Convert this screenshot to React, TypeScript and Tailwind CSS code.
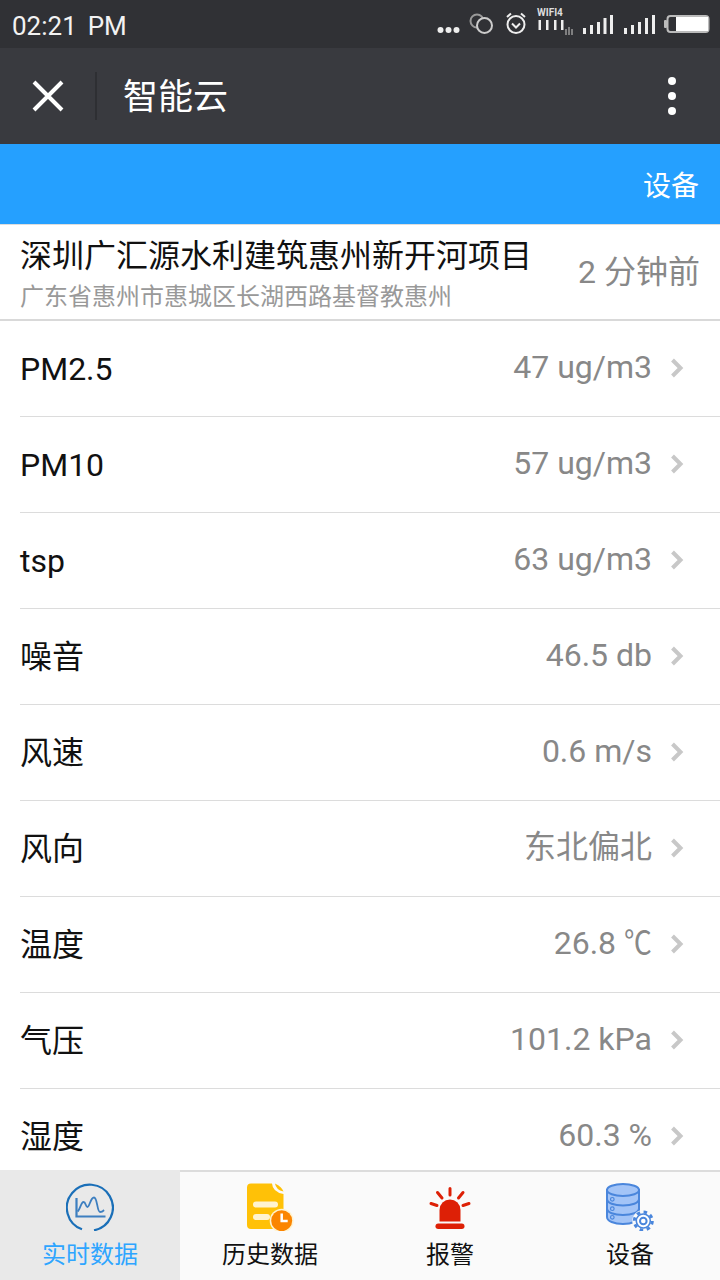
const rows = [
  { name: 'PM2.5', value: '47 ug/m3' },
  { name: 'PM10', value: '57 ug/m3' },
  { name: 'tsp', value: '63 ug/m3' },
  { name: '噪音', value: '46.5 db' },
  { name: '风速', value: '0.6 m/s' },
  { name: '风向', value: '东北偏北' },
  { name: '温度', value: '26.8 ', unit: '℃' },
  { name: '气压', value: '101.2 kPa' },
  { name: '湿度', value: '60.3 %' },
];

function StatusIcons() {
  return (
    <svg width="300" height="48" viewBox="0 0 300 48" fill="none">
      <circle cx="20.5" cy="30" r="3" fill="#eee" />
      <circle cx="28.5" cy="30" r="3" fill="#eee" />
      <circle cx="36.5" cy="30" r="3" fill="#eee" />
      <circle cx="57" cy="21" r="6.5" stroke="#999" strokeWidth="2" />
      <circle cx="64.5" cy="25.5" r="7.5" stroke="#ccc" strokeWidth="2" fill="#303135" />
      <circle cx="96" cy="24.5" r="8.5" stroke="#eee" strokeWidth="2" />
      <path d="M92 23.5l4 4 4-4M87 17l4-3.5M105 17l-4-3.5" stroke="#eee" strokeWidth="2" />
      <text x="117" y="16" fontSize="10" fontWeight="700" fill="#ddd" fontFamily="Roboto, sans-serif">WIFI4</text>
      <rect x="118.5" y="20" width="2.5" height="10" fill="#eee" />
      <rect x="126" y="20" width="2.5" height="10" fill="#eee" />
      <rect x="134" y="20" width="2.5" height="10" fill="#eee" />
      <rect x="141" y="20" width="2.5" height="10" fill="#eee" />
      <path d="M146 29v6M149 27v8M152 29v6" stroke="#999" strokeWidth="1.5" />
      <rect x="163" y="28" width="3" height="6" fill="#eee" />
      <rect x="170" y="25" width="3" height="9" fill="#eee" />
      <rect x="177" y="22" width="3" height="12" fill="#eee" />
      <rect x="183.5" y="18" width="3" height="16" fill="#eee" />
      <rect x="190" y="15" width="3" height="19" fill="#eee" />
      <rect x="204" y="28" width="3" height="6" fill="#eee" />
      <rect x="211" y="25" width="3" height="9" fill="#eee" />
      <rect x="218" y="22" width="3" height="12" fill="#eee" />
      <rect x="225" y="18" width="3" height="16" fill="#eee" />
      <rect x="232" y="15" width="3" height="19" fill="#eee" />
      <rect x="244" y="20" width="3" height="8" rx="1" fill="#bbb" />
      <rect x="247.5" y="16" width="41" height="16" rx="3" stroke="#bbb" strokeWidth="2" />
      <rect x="256" y="17" width="32" height="14" fill="#fff" />
    </svg>
  );
}

function Chevron() {
  return (
    <svg width="14" height="20" viewBox="0 0 14 20" fill="none" className="mb-[2px]">
      <path d="M2.5 2l8 8-8 8" stroke="#c8c8c8" strokeWidth="4" />
    </svg>
  );
}

function TabIcon({ kind }: { kind: number }) {
  if (kind === 0)
    return (
      <svg width="48" height="48" viewBox="0 0 48 48" fill="none">
        <path d="M16 46.3A23 23 0 1 1 28 47.3" stroke="#1a6fb8" strokeWidth="2.2" />
        <path d="M10.5 15v18.500h29" stroke="#3d7fc0" strokeWidth="2.200" />
        <path d="M11.5 28.5C14 27 15 19 17.5 19S19.5 24 21.5 24S24.5 14.5 28 14.5S31 29 34 29S37 28 38 27" stroke="#3d7fc0" strokeWidth="1.800" />
      </svg>
    );
  if (kind === 1)
    return (
      <svg width="48" height="48" viewBox="0 0 48 48" fill="none">
        <path d="M5 0.5H26Q26.5 9 37.5 11V42a4 4 0 0 1-4 4H5a4 4 0 0 1-4-4V4.500a4 4 0 0 1 4-4z" fill="#ffc107" />
        <path d="M29 0.5Q36 4 37.500 8.500Q30 7 29 0.500z" fill="#ffc107" />
        <rect x="7" y="18.500" width="25" height="6" rx="3" fill="#fff3d0" />
        <rect x="7" y="31" width="17" height="6" rx="3" fill="#fff3d0" />
        <circle cx="35.700" cy="37.700" r="12" fill="#fff3d0" />
        <circle cx="35.700" cy="37.700" r="10.500" fill="#fb8500" />
        <path d="M35.700 30.500v7.500h6" stroke="#fff" strokeWidth="2.500" />
      </svg>
    );
  if (kind === 2)
    return (
      <svg width="48" height="48" viewBox="0 0 48 48" fill="none">
        <path d="M13.500 38.500V27a10.500 10.500 0 0 1 21 0v11.500z" fill="#dd2006" />
        <rect x="9.500" y="40.500" width="29" height="5.500" rx="2.700" fill="#dd2006" />
        <path d="M24 5.500v6.500M11.500 9.500l4.500 5.500M37 9.500l-4.500 5.500M5 20.500l6 2M43 20.500l-6 2" stroke="#dd2006" strokeWidth="3" strokeLinecap="round" />
      </svg>
    );
  return (
    <svg width="48" height="48" viewBox="0 0 48 48" fill="none">
      <path d="M1 7v27c0 4 7 7 16 7s16-3 16-7V7z" fill="#a3c4f7" stroke="#4a86dc" strokeWidth="2" />
      <ellipse cx="17" cy="7" rx="16" ry="6" fill="#a3c4f7" stroke="#4a86dc" strokeWidth="2" />
      <path d="M1 16c0 4 7 6.500 16 6.500s16-2.500 16-6.500M1 25.500c0 4 7 6.500 16 6.500s16-2.500 16-6.500" stroke="#4a86dc" strokeWidth="2" />
      <circle cx="6.300" cy="16.300" r="1.800" stroke="#4a86dc" strokeWidth="1.200" />
      <circle cx="6.300" cy="25.700" r="1.800" stroke="#4a86dc" strokeWidth="1.200" />
      <circle cx="6.300" cy="34.300" r="1.800" stroke="#4a86dc" strokeWidth="1.200" />
      <circle cx="37.300" cy="38" r="11" fill="#fafafa" />
      <circle cx="37.300" cy="38" r="9" stroke="#4a86dc" strokeWidth="3" strokeDasharray="3.500 3.570" />
      <circle cx="37.300" cy="38" r="7" fill="#fff" stroke="#4a86dc" strokeWidth="1.600" />
      <circle cx="37.300" cy="38" r="3.300" stroke="#4a86dc" strokeWidth="2" />
    </svg>
  );
}

const tabs = ['实时数据', '历史数据', '报警', '设备'];

export default function App() {
  return (
    <div className="relative w-[720px] h-[1280px] overflow-hidden bg-white flex flex-col font-['Roboto','Noto_Sans_CJK_SC',sans-serif]">
      <div className="relative h-12 bg-[#303135] flex items-center justify-between pl-3 text-[#f2f2f2]">
        <span className="pt-[3px] text-[26px] leading-none whitespace-pre [word-spacing:-1px]">02:21  PM</span>
        <StatusIcons />
      </div>
      <div className="h-24 bg-[#393a3f] flex items-center text-white">
        <div className="w-[97px] h-12 flex items-center justify-center border-r-2 border-[#2e2f33]">
          <svg width="32" height="32" viewBox="0 0 32 32" fill="none">
            <path d="M2 2l28 28M30 2L2 30" stroke="#fff" strokeWidth="4" />
          </svg>
        </div>
        <span className="pl-[26px] pt-[3px] text-[35px] leading-none">智能云</span>
        <div className="ml-auto mr-[44px] flex flex-col gap-[7px]">
          <div className="w-[8px] h-[8px] rounded-full bg-white" />
          <div className="w-[8px] h-[8px] rounded-full bg-white" />
          <div className="w-[8px] h-[8px] rounded-full bg-white" />
        </div>
      </div>
      <div className="h-20 bg-[#25a0ff] flex items-center justify-end pr-[21px] pt-[6px] text-white text-[28px]">设备</div>
      <div className="h-[97px] flex items-center justify-between pl-[20px] pr-5 border-t border-t-[#dddddd] border-b-2 border-b-[#d9d9d9]">
        <div className="pt-[5px]">
          <div className="text-[32px] leading-[44px] text-[#111]">深圳广汇源水利建筑惠州新开河项目</div>
          <div className="text-[24px] leading-[38px] text-[#999]">广东省惠州市惠城区长湖西路基督教惠州</div>
        </div>
        <span className="text-[32px] text-[#888]">2 分钟前</span>
      </div>
      <div className="pl-[20px]">
        {rows.map((row) => (
          <div key={row.name} className="h-24 flex items-center justify-between pr-[36px] border-b border-[#dcdcdc]">
            <span className="text-[32px] text-[#111]">{row.name}</span>
            <span className="flex items-center gap-[18px] text-[32px] text-[#888]">
              <span className="pb-[4px] whitespace-pre">
                {row.value}
                {row.unit && <span className="inline-block w-[28px] origin-left scale-x-[.87]">{row.unit}</span>}
              </span>
              <Chevron />
            </span>
          </div>
        ))}
      </div>
      <div className="absolute bottom-0 left-0 right-0 h-[110px] bg-[#fafafa] border-t-2 border-[#dcdcdc] grid grid-cols-4">
        {tabs.map((t, i) => (
          <div key={t} className={i === 0 ? 'flex flex-col items-center -mt-[2px] pt-[13px] bg-[#e9e9e9] text-[#2ea5ff]' : 'flex flex-col items-center pt-[11px] text-[#111]'}>
            <TabIcon kind={i} />
            <span className="text-[24px] leading-[32px] mt-[8px]">{t}</span>
          </div>
        ))}
      </div>
    </div>
  );
}
